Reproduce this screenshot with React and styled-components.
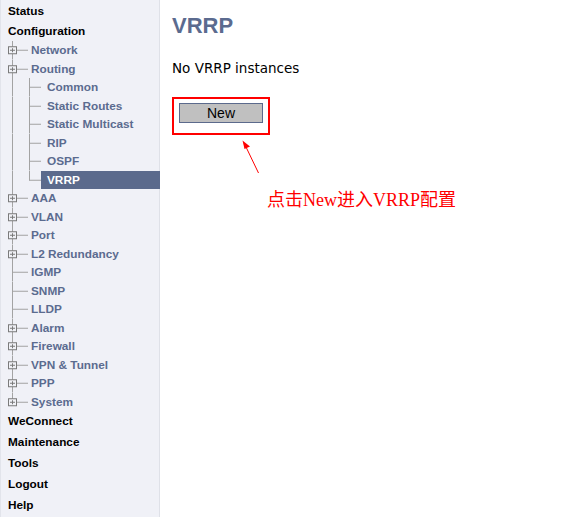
import React from 'react';
import styled, { createGlobalStyle } from 'styled-components';

const GlobalStyle = createGlobalStyle`
    html, body {
        margin: 0;
        padding: 0;
        background: #ffffff;
    }
    body {
        font-family: "Liberation Sans", Arial, sans-serif;
    }
`;

const LINE = '#a3a3a3';
const ROW = 18.5;

const tree = [
    { label: 'Network', level: 1, box: true },
    { label: 'Routing', level: 1, box: true },
    { label: 'Common', level: 2 },
    { label: 'Static Routes', level: 2 },
    { label: 'Static Multicast', level: 2 },
    { label: 'RIP', level: 2 },
    { label: 'OSPF', level: 2 },
    { label: 'VRRP', level: 2, last: true, active: true },
    { label: 'AAA', level: 1, box: true },
    { label: 'VLAN', level: 1, box: true },
    { label: 'Port', level: 1, box: true },
    { label: 'L2 Redundancy', level: 1, box: true },
    { label: 'IGMP', level: 1 },
    { label: 'SNMP', level: 1 },
    { label: 'LLDP', level: 1 },
    { label: 'Alarm', level: 1, box: true },
    { label: 'Firewall', level: 1, box: true },
    { label: 'VPN & Tunnel', level: 1, box: true },
    { label: 'PPP', level: 1, box: true },
    { label: 'System', level: 1, box: true, last: true },
];

function Connector(props) {
    const mid = ROW / 2;
    const width = props.level === 2 ? 41 : 31;
    return (
        <svg width={width} height={ROW} style={{ flex: 'none', display: 'block' }}>
            <line
                x1="12.5" y1="0" x2="12.5"
                y2={props.level === 1 && props.last ? mid : ROW}
                stroke={LINE} strokeWidth="1"
            />
            {props.level === 1 && (
                <line x1="12.5" y1={mid} x2="28" y2={mid} stroke={LINE} strokeWidth="1" />
            )}
            {props.level === 2 && (
                <g>
                    <line x1="29.5" y1="0" x2="29.5" y2={props.last ? mid + 0.5 : ROW} stroke={LINE} strokeWidth="1" />
                    <line x1="29.5" y1={mid} x2="41" y2={mid} stroke={LINE} strokeWidth="1" />
                </g>
            )}
            {props.box && (
                <g>
                    <rect x="8.5" y={mid - 3.5} width="8" height="7" fill="#f0f1f6" stroke="#7a7a7a" strokeWidth="1" />
                    <line x1="10" y1={mid} x2="15" y2={mid} stroke="#7a7a7a" strokeWidth="1" />
                    <line x1="12.5" y1={mid - 2} x2="12.5" y2={mid + 2} stroke="#7a7a7a" strokeWidth="1" />
                </g>
            )}
        </svg>
    );
}

export default function App() {
    return (
        <Page>
            <GlobalStyle />
            <Sidebar>
                <TopItem $height={21}>Status</TopItem>
                <TopItem $height={20}>Configuration</TopItem>
                <Tree>
                    {tree.map((item) => (
                        <TreeRow key={item.label}>
                            <Connector level={item.level} box={item.box} last={item.last} />
                            <TreeLabel $active={item.active} $level={item.level}>
                                {item.label}
                            </TreeLabel>
                        </TreeRow>
                    ))}
                </Tree>
                <TopItem $height={20}>WeConnect</TopItem>
                <TopItem $height={21}>Maintenance</TopItem>
                <TopItem $height={21}>Tools</TopItem>
                <TopItem $height={21}>Logout</TopItem>
                <TopItem $height={21}>Help</TopItem>
            </Sidebar>
            <Main>
                <Heading>VRRP</Heading>
                <Message>No VRRP instances</Message>
                <Highlight>
                    <Button>New</Button>
                </Highlight>
                <Arrow width="24" height="40" viewBox="0 0 24 40">
                    <line x1="18.5" y1="34" x2="6" y2="8" stroke="#ff0000" strokeWidth="1" />
                    <polygon points="2.5,1.5 10,7.5 4.5,10" fill="#ff0000" />
                </Arrow>
                <Note>点击New进入VRRP配置</Note>
            </Main>
        </Page>
    );
};

const Page = styled.div`
    display: flex;
    align-items: stretch;
    width: 566px;
    min-height: 517px;
`;

const Sidebar = styled.div`
    width: 158px;
    flex: none;
    background: #f0f1f7;
    border-left: 1px solid #e2e4eb;
    border-right: 1px solid #dfe1e8;
    padding-top: 0;
`;

const TopItem = styled.div`
    height: ${(p) => p.$height}px;
    display: flex;
    align-items: center;
    padding-left: 7px;
    font-size: 11.8px;
    font-weight: 700;
    color: #000000;
`;

const Tree = styled.div`
    display: flex;
    flex-direction: column;
`;

const TreeRow = styled.div`
    height: ${ROW}px;
    display: flex;
    align-items: center;
    margin-left: -1px;
`;

const TreeLabel = styled.div`
    flex: 1;
    height: ${ROW - 1}px;
    display: flex;
    align-items: center;
    padding-left: ${(p) => (p.$level === 2 ? 6 : 0)}px;
    font-size: 11.8px;
    font-weight: 700;
    color: ${(p) => (p.$active ? '#ffffff' : '#5b6b8f')};
    background: ${(p) => (p.$active ? '#5b6a8c' : 'transparent')};
    margin-right: -1px;
`;

const Main = styled.div`
    position: relative;
    flex: 1;
    padding-left: 12px;
    display: flex;
    flex-direction: column;
    align-items: flex-start;
`;

const Heading = styled.h1`
    margin: 13px 0 0 0;
    font-size: 22px;
    line-height: 26px;
    font-weight: 700;
    color: #5b6b8f;
`;

const Message = styled.p`
    margin: 20px 0 0 0;
    font-family: "DejaVu Sans", Verdana, sans-serif;
    font-size: 13.5px;
    line-height: 18px;
`;

const Highlight = styled.div`
    margin-top: 20px;
    width: 89px;
    height: 30px;
    border: 2px solid #ff0000;
    padding: 4px 0 0 5px;
    box-sizing: content-box;
`;

const Button = styled.button`
    width: 84px;
    height: 20px;
    padding: 0;
    background: #c0c0c0;
    border: 1px solid #5b6a8c;
    font-family: "Liberation Sans", Arial, sans-serif;
    font-size: 14px;
    color: #000000;
    cursor: pointer;
`;

const Arrow = styled.svg`
    position: absolute;
    left: 80px;
    top: 139px;
`;

const Note = styled.div`
    position: absolute;
    left: 107px;
    top: 189px;
    font-family: "Liberation Serif", "Noto Sans CJK SC", serif;
    font-size: 18px;
    line-height: 22px;
    color: #ff0000;
    white-space: nowrap;
`;
